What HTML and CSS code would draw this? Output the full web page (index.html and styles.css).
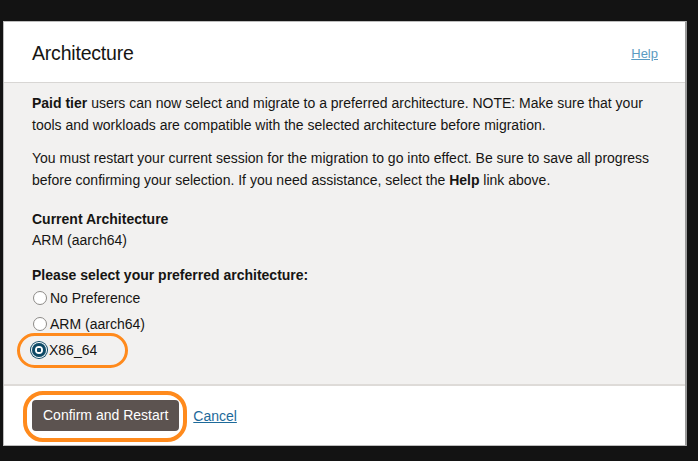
FILE: index.html
```html
<!DOCTYPE html>
<html>
<head>
<meta charset="utf-8">
<link rel="stylesheet" href="styles.css">
</head>
<body>
<div class="dialog">
  <div class="header">
    <h1 class="title">Architecture</h1>
    <a class="help" href="#">Help</a>
  </div>
  <div class="body">
    <p class="para"><b>Paid tier</b> users can now select and migrate to a preferred architecture. NOTE: Make sure that your tools and workloads are compatible with the selected architecture before migration.</p>
    <p class="para">You must restart your current session for the migration to go into effect. Be sure to save all progress before confirming your selection. If you need assistance, select the <b>Help</b> link above.</p>
    <div class="section">
      <div class="label">Current Architecture</div>
      <div class="value">ARM (aarch64)</div>
    </div>
    <div class="section select">
      <div class="label">Please select your preferred architecture:</div>
      <div class="options">
        <div class="option"><span class="radio"></span><span>No Preference</span></div>
        <div class="option"><span class="radio"></span><span>ARM (aarch64)</span></div>
        <div class="option selected hl"><span class="radio on"></span><span>X86_64</span></div>
      </div>
    </div>
  </div>
  <div class="footer">
    <button class="btn hl-btn">Confirm and Restart</button>
    <a class="cancel" href="#">Cancel</a>
  </div>
</div>
</body>
</html>
```

FILE: styles.css
```css
html, body {
  margin: 0;
  padding: 0;
  background: #131313;
  height: 100%;
}
body {
  font-family: "Liberation Sans", Arial, sans-serif;
  color: #161513;
  overflow: hidden;
}
.dialog {
  margin: 21px 0 0 3px;
  width: 681px;
  height: 423px;
  background: #fff;
  border: 1px solid #bdbdbd;
  border-right: 2px solid #9a9a9a;
  display: flex;
  flex-direction: column;
}
.header {
  height: 60px;
  border-bottom: 1px solid #d8d6d4;
  display: flex;
  align-items: center;
  justify-content: space-between;
  padding: 0 27px 0 28px;
}
.title {
  margin: 2px 0 0 0;
  font-size: 19.5px;
  font-weight: normal;
  letter-spacing: -0.2px;
  color: #161513;
}
.help {
  font-size: 13px;
  color: #5b9bc2;
  text-decoration: underline;
  margin-top: 2px;
}
.body {
  flex: 1;
  background: #f2f1f0;
  padding: 9px 28px 0 28px;
  font-size: 14px;
  line-height: 22px;
  border-bottom: 2px solid #dedbd8;
}
.para {
  margin: 0 0 11px 0;
}
.section {
  margin-top: 18px;
  line-height: 21px;
}
.section.select {
  margin-top: 14px;
}
.label {
  font-weight: bold;
}
.options {
  display: flex;
  flex-direction: column;
  margin-top: -1px;
}
.option {
  height: 26px;
  display: flex;
  align-items: center;
  gap: 3px;
  position: relative;
  width: max-content;
}
.radio {
  width: 12px;
  height: 12px;
  border: 1px solid #8d8a87;
  border-radius: 50%;
  background: #fff;
  margin-left: 1px;
  box-sizing: content-box;
}
.radio.on {
  width: 8px;
  height: 8px;
  border: 3px solid #0e4a66;
  margin-left: 0;
  background: radial-gradient(circle, #0e4a66 0 2px, #fff 2.5px);
  box-shadow: 0 0 0 1px #fff, 0 0 0 2px #0e4a66;
}
.hl::after {
  content: "";
  position: absolute;
  left: -15px;
  right: -31px;
  top: -4px;
  bottom: -5px;
  border: 3.5px solid #ff8a1c;
  border-radius: 18px;
  pointer-events: none;
}
.footer {
  height: 59px;
  display: flex;
  align-items: center;
  padding: 0 0 0 28px;
  gap: 14px;
}
.btn {
  position: relative;
  height: 31px;
  padding: 0 11px;
  background: #5c5350;
  color: #fff;
  border: none;
  border-radius: 4px;
  font-family: "Liberation Sans", Arial, sans-serif;
  font-size: 14px;
  margin-top: -1px;
}
.hl-btn::after {
  content: "";
  position: absolute;
  left: -9px;
  right: -8px;
  top: -9px;
  bottom: -11px;
  border: 4px solid #ff8a1c;
  border-radius: 20px;
  pointer-events: none;
}
.cancel {
  font-size: 14px;
  color: #1d6a9a;
  text-decoration: underline;
}
```
